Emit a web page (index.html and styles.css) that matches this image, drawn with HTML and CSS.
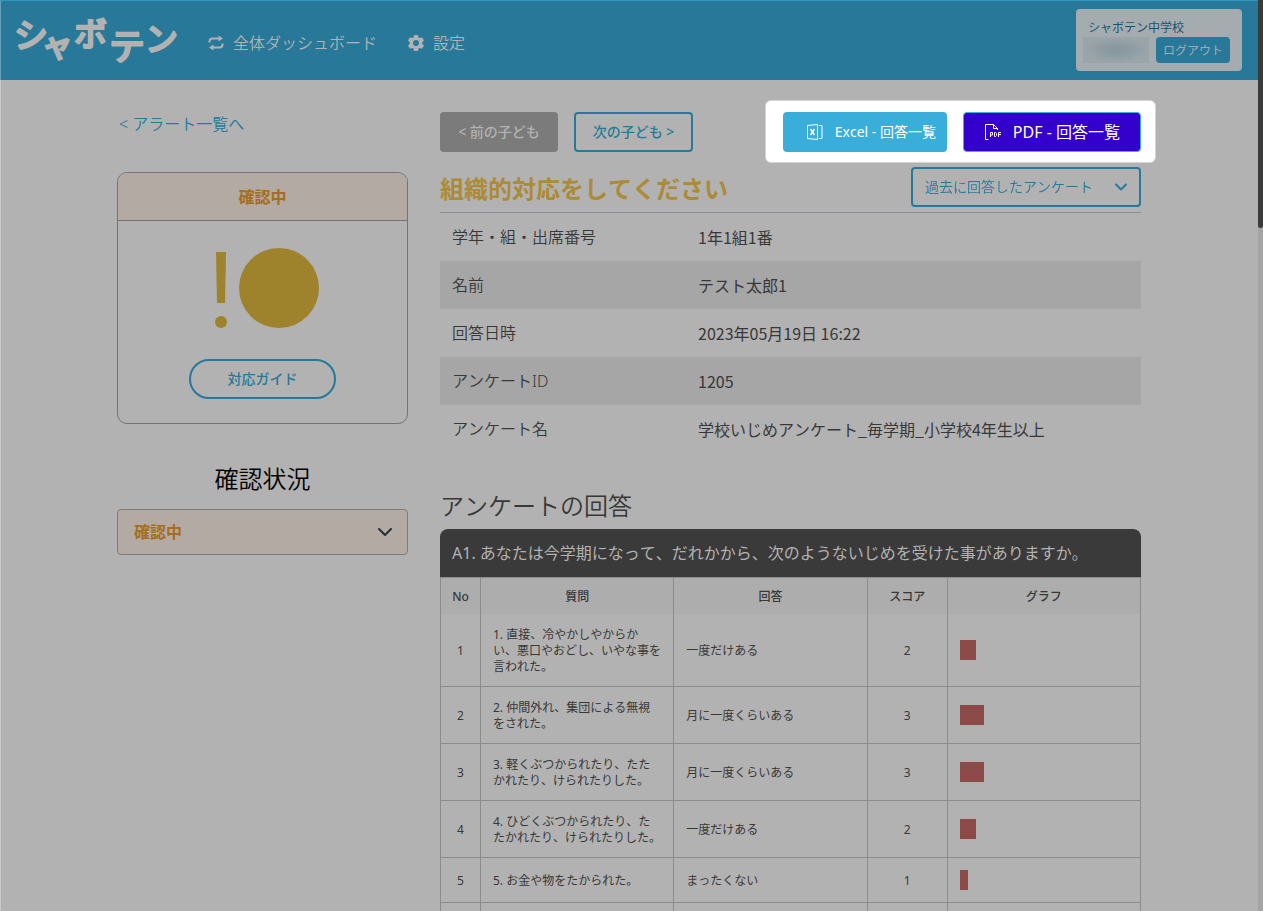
FILE: index.html
```html
<!DOCTYPE html>
<html lang="ja">
<head>
<meta charset="utf-8">
<meta name="viewport" content="width=device-width, initial-scale=1">
<title>シャボテン</title>
<link rel="stylesheet" href="styles.css">
</head>
<body>
<header class="topbar">
  <a class="brand" href="#" aria-label="シャボテン">
    <svg class="brand-logo" viewBox="0 0 164 56" aria-hidden="true">
      <text class="brand-text">
        <tspan x="-2" y="36" font-size="34">シ</tspan><tspan x="27" y="47" font-size="32" rotate="-8">ャ</tspan><tspan x="58" y="34" font-size="33">ボ</tspan><tspan x="93" y="48" font-size="36">テ</tspan><tspan x="129" y="39" font-size="33">ン</tspan>
      </text>
    </svg>
  </a>
  <nav class="nav">
    <a class="nav-link" href="#">
      <svg class="nav-icon" viewBox="0 0 16 16" fill="none" stroke="currentColor" stroke-width="2" aria-hidden="true"><path d="M1.500 7.500V6.500q0-3 3-3H11M14.500 8.500v1q0 3-3 3H5"/><path d="M10.500.5l4.500 3-4.500 3zM5.500 9.500l-4.500 3 4.500 3z" fill="currentColor" stroke="none"/></svg>
      <span>全体ダッシュボード</span>
    </a>
    <a class="nav-link" href="#">
      <svg class="nav-icon" viewBox="0 0 16 16" aria-hidden="true"><path fill="currentColor" fill-rule="evenodd" d="M6 0h4l.4 2.200 1.500.9 2.100-.8 2 3.200-1.700 1.400v2.200L16 10.500l-2 3.200-2.100-.8-1.500.9L10 16H6l-.4-2.200-1.500-.9-2.100.8-2-3.200 1.700-1.400V6.900L0 5.500l2-3.200 2.100.8 1.500-.9zM8 5a3 3 0 1 0 0 6a3 3 0 0 0 0-6z"/></svg>
      <span>設定</span>
    </a>
  </nav>
  <div class="account">
    <div class="account-school">シャボテン中学校</div>
    <div class="account-row">
      <div class="account-name"></div>
      <button class="logout" type="button">ログアウト</button>
    </div>
  </div>
</header>

<main class="page">
  <aside class="side">
    <a class="back" href="#">&lt; アラート一覧へ</a>
    <section class="card">
      <h2 class="card-head">確認中</h2>
      <div class="card-body">
        <svg class="alert-mark" viewBox="0 0 104 82" aria-hidden="true"><path d="M1 4h10l-1 51H2z"/><circle cx="6" cy="74" r="6"/><circle cx="64" cy="40" r="40"/></svg>
        <button class="guide" type="button">対応ガイド</button>
      </div>
    </section>
    <label class="status-title" for="status">確認状況</label>
    <div class="field">
      <select class="status-select" id="status"><option>確認中</option></select>
      <svg class="chevron chevron-dark" viewBox="0 0 16 16" aria-hidden="true"><path d="M2 5l6 6 6-6"/></svg>
    </div>
  </aside>

  <div class="content">
    <div class="toolbar">
      <button class="btn btn-prev" type="button">&lt; 前の子ども</button>
      <button class="btn btn-next" type="button">次の子ども &gt;</button>
      <div class="exports">
        <button class="btn btn-excel" type="button">
          <svg class="file-icon" viewBox="0 0 16 16" fill="none" stroke="currentColor" aria-hidden="true"><path d="M.5 1.500l10-1v15l-10-1zM12 1.500h3v13h-3"/><path stroke-width="1.500" d="M3.500 5l4 6M7.500 5l-4 6"/></svg>
          <span>Excel - 回答一覧</span>
        </button>
        <button class="btn btn-pdf" type="button">
          <svg class="file-icon" viewBox="0 0 16 16" fill="none" stroke="currentColor" aria-hidden="true"><path d="M3.500 15.500h-3V.5h8l4 4V6M8.500.5v4h4"/><path d="M5.500 13V8.500h2v2.500h-2M9.500 8.500h1l1 1v2l-1 1h-1zM13.500 13V8.500H16M13.500 10.500H16"/></svg>
          <span>PDF - 回答一覧</span>
        </button>
      </div>
    </div>

    <div class="title-row">
      <h1 class="title">組織的対応をしてください</h1>
      <div class="field">
        <select class="past-select" aria-label="過去に回答したアンケート"><option>過去に回答したアンケート</option></select>
        <svg class="chevron chevron-blue" viewBox="0 0 16 16" aria-hidden="true"><path d="M3 5.500l5 5 5-5"/></svg>
      </div>
    </div>

    <dl class="info">
      <div class="info-row"><dt>学年・組・出席番号</dt><dd>1年1組1番</dd></div>
      <div class="info-row"><dt>名前</dt><dd>テスト太郎1</dd></div>
      <div class="info-row"><dt>回答日時</dt><dd>2023年05月19日 16:22</dd></div>
      <div class="info-row"><dt>アンケートID</dt><dd>1205</dd></div>
      <div class="info-row"><dt>アンケート名</dt><dd>学校いじめアンケート_毎学期_小学校4年生以上</dd></div>
    </dl>

    <h2 class="answers-title">アンケートの回答</h2>
    <h3 class="question">A1. あなたは今学期になって、だれかから、次のようないじめを受けた事がありますか。</h3>
    <table class="answers">
      <colgroup><col class="col-no"><col class="col-wide"><col class="col-wide"><col class="col-score"><col class="col-wide"></colgroup>
      <thead><tr><th>No</th><th>質問</th><th>回答</th><th>スコア</th><th>グラフ</th></tr></thead>
      <tbody>
        <tr><td class="num">1</td><td>1. 直接、冷やかしやからかい、悪口やおどし、いやな事を言われた。</td><td>一度だけある</td><td class="num">2</td><td class="graph"><div class="bar" style="width:16px"></div></td></tr>
        <tr><td class="num">2</td><td>2. 仲間外れ、集団による無視をされた。</td><td>月に一度くらいある</td><td class="num">3</td><td class="graph"><div class="bar" style="width:24px"></div></td></tr>
        <tr><td class="num">3</td><td>3. 軽くぶつかられたり、たたかれたり、けられたりした。</td><td>月に一度くらいある</td><td class="num">3</td><td class="graph"><div class="bar" style="width:24px"></div></td></tr>
        <tr><td class="num">4</td><td>4. ひどくぶつかられたり、たたかれたり、けられたりした。</td><td>一度だけある</td><td class="num">2</td><td class="graph"><div class="bar" style="width:16px"></div></td></tr>
        <tr><td class="num">5</td><td>5. お金や物をたかられた。</td><td>まったくない</td><td class="num">1</td><td class="graph"><div class="bar" style="width:8px"></div></td></tr>
        <tr><td class="num"></td><td></td><td></td><td class="num"></td><td class="graph"><div class="bar" style="width:8px"></div></td></tr>
      </tbody>
    </table>
  </div>
</main>
<div class="scroll-track"><div class="scroll-thumb"></div></div>
</body>
</html>
```

FILE: styles.css
```css
:root {
  --bg: #b2b2b2;
  --blue: #287999;
  --ink: #383838;
  --line: #8c8c8c;
  --tan: #b2aaa3;
  --orange: #a66d1f;
}

* { box-sizing: border-box; }

html, body { height: 100%; }

body {
  margin: 0;
  padding-right: 5px;
  overflow: hidden;
  background: var(--bg);
  color: var(--ink);
  font-family: "Noto Sans", "Noto Sans CJK JP", sans-serif;
  font-size: 16px;
  font-weight: 350;
  font-kerning: none;
  line-height: 24px;
}

body::before {
  content: "";
  position: fixed;
  inset: 0;
  border: 0 solid rgba(255, 255, 255, 0.3);
  border-width: 1px 0 0 1px;
  border-top-color: rgba(60, 180, 230, 0.5);
  pointer-events: none;
}

h1, h2, h3, dl, dd { margin: 0; font-weight: inherit; }

a { color: inherit; text-decoration: none; }

button, select { font: inherit; font-kerning: none; cursor: pointer; }

/* Header */
.topbar {
  display: flex;
  align-items: center;
  height: 80px;
  padding: 0 16px;
  background: var(--blue);
  color: var(--bg);
}

.brand { display: flex; margin-right: 28px; }

.brand-logo { width: 164px; height: 56px; overflow: visible; }

.brand-text {
  font-family: "Noto Sans CJK JP", sans-serif;
  font-weight: 500;
  fill: var(--bg);
  stroke: var(--bg);
  stroke-width: 2px;
  stroke-linejoin: round;
}

.nav { display: flex; flex: 1; gap: 31px; padding-top: 6px; }

.nav-link { display: flex; align-items: center; gap: 9px; }

.nav-icon { width: 16px; height: 16px; }

.account {
  width: 166px;
  height: 62px;
  padding: 8px 12px 8px 7px;
  border-radius: 4px;
  background: #a4acaf;
}

.account-school {
  padding: 3px 0 1px 5px;
  color: #14566f;
  font-size: 12px;
  font-weight: 400;
  line-height: 16px;
}

.account-row { display: flex; justify-content: space-between; }

.account-name {
  width: 66px;
  height: 26px;
  background: radial-gradient(ellipse at center, #87989f 10%, #9aa5aa 70%);
}

.logout {
  width: 74px;
  height: 26px;
  padding: 1px 0 0;
  border: 0;
  border-radius: 4px;
  background: var(--blue);
  color: var(--bg);
  font-size: 12px;
}

/* Page columns */
.page {
  display: grid;
  grid-template-columns: 291px minmax(0, 1fr);
  gap: 32px;
  max-width: 1024px;
  margin: 0 auto;
  padding-top: 32px;
}

.back { display: block; margin-bottom: 36px; padding-left: 2px; color: var(--blue); }

.card {
  overflow: hidden;
  border: 1px solid #70747c;
  border-radius: 10px;
}

.card-head {
  height: 48px;
  border-bottom: 1px solid #747474;
  background: var(--tan);
  color: var(--orange);
  font-size: 16px;
  font-weight: 700;
  line-height: 48px;
  text-align: center;
}

.card-body {
  display: flex;
  flex-direction: column;
  align-items: center;
  gap: 29px;
  padding: 27px 0 24px;
}

.alert-mark { width: 104px; height: 82px; margin-left: 8px; fill: #9e822c; }

.guide {
  width: 147px;
  height: 40px;
  border: 2px solid var(--blue);
  border-radius: 20px;
  background: transparent;
  color: var(--blue);
  font-size: 14px;
  font-weight: 500;
}

.status-title {
  display: block;
  padding: 37px 0 12px;
  color: #000;
  font-size: 24px;
  line-height: 36px;
  text-align: center;
}

.field { position: relative; }

.status-select, .past-select { appearance: none; border-radius: 4px; }

.status-select {
  width: 100%;
  height: 46px;
  padding: 0 16px;
  border: 1px solid #7c7c7c;
  background: var(--tan);
  color: var(--orange);
  font-weight: 700;
}

.chevron {
  position: absolute;
  top: 50%;
  width: 16px;
  height: 16px;
  margin-top: -8px;
  fill: none;
  stroke-width: 2;
  stroke-linecap: round;
  stroke-linejoin: round;
  pointer-events: none;
}

.chevron-dark { right: 15px; stroke: #263037; }

.chevron-blue { right: 12px; stroke: var(--blue); }

/* Main column */
.toolbar { display: flex; gap: 16px; }

.btn {
  height: 40px;
  padding: 0;
  border: 0;
  border-radius: 4px;
  font-size: 14px;
}

.btn-prev { width: 118px; background: #7b7b7b; color: var(--bg); font-weight: 500; }

.btn-next {
  width: 119px;
  border: 2px solid var(--blue);
  background: transparent;
  color: var(--blue);
  font-weight: 500;
}

.exports {
  position: relative;
  z-index: 0;
  display: flex;
  gap: 16px;
  margin-left: auto;
}

.exports::before {
  content: "";
  position: absolute;
  inset: -12px -15px -11px -18px;
  z-index: -1;
  border: 1px solid #d4d4d4;
  border-radius: 6px;
  background: #fff;
}

.btn-excel, .btn-pdf {
  display: flex;
  align-items: center;
  justify-content: flex-end;
  gap: 12px;
  color: #fff;
  font-weight: 400;
}

.btn-excel { width: 164px; padding-right: 11px; background: #3aaedb; }

.btn-pdf {
  width: 178px;
  padding-right: 20px;
  border: 1px solid #3aaedb;
  background: #3300cc;
  font-size: 16px;
}

.file-icon { width: 16px; height: 16px; overflow: visible; }

.title-row {
  display: flex;
  align-items: center;
  justify-content: space-between;
  padding: 15px 0 5px;
  border-bottom: 1px solid #8b8e94;
}

.title {
  padding-top: 3px;
  color: #ac8b36;
  font-size: 24px;
  font-weight: 700;
  line-height: 36px;
}

.past-select {
  width: 230px;
  height: 40px;
  padding: 0 12px;
  border: 2px solid var(--blue);
  background: transparent;
  color: var(--blue);
  font-size: 14px;
}

.info-row {
  display: grid;
  grid-template-columns: 246px 1fr;
  height: 48px;
  padding: 12px;
}

.info-row:nth-child(even) { background: #a6a6a6; }

.info-row dd { font-family: "Noto Sans CJK JP", sans-serif; font-weight: 400; }

.answers-title {
  padding: 35px 0 5px;
  font-size: 24px;
  line-height: 36px;
}

.question {
  padding: 12px;
  border-radius: 8px 8px 0 0;
  background: #3a3a3a;
  color: var(--bg);
  font-size: 16px;
  font-weight: 400;
}

.answers {
  width: 100%;
  table-layout: fixed;
  border-collapse: collapse;
  font-size: 12px;
  font-weight: 400;
  line-height: 16px;
}

.col-no { width: 40px; }

.col-score { width: 80px; }

.answers th, .answers td { padding: 13px 12px 11px; border: 1px solid var(--line); }

.answers th {
  padding: 11px 0 9px;
  border-bottom: 0;
  background: #adadad;
  font-weight: 500;
}

.answers tbody tr:first-child td { border-top: 0; }

.answers .num { padding: 13px 0 11px; text-align: center; }

.answers .graph { padding: 12px; }

.bar { height: 20px; background: #8c4b49; }

/* Scroll indicator */
.scroll-track {
  position: fixed;
  top: 0;
  right: 0;
  bottom: 0;
  width: 5px;
  background: #a4a4a4;
}

.scroll-thumb { height: 25%; border-radius: 0 0 3px 3px; background: #3b3b3b; }
```
